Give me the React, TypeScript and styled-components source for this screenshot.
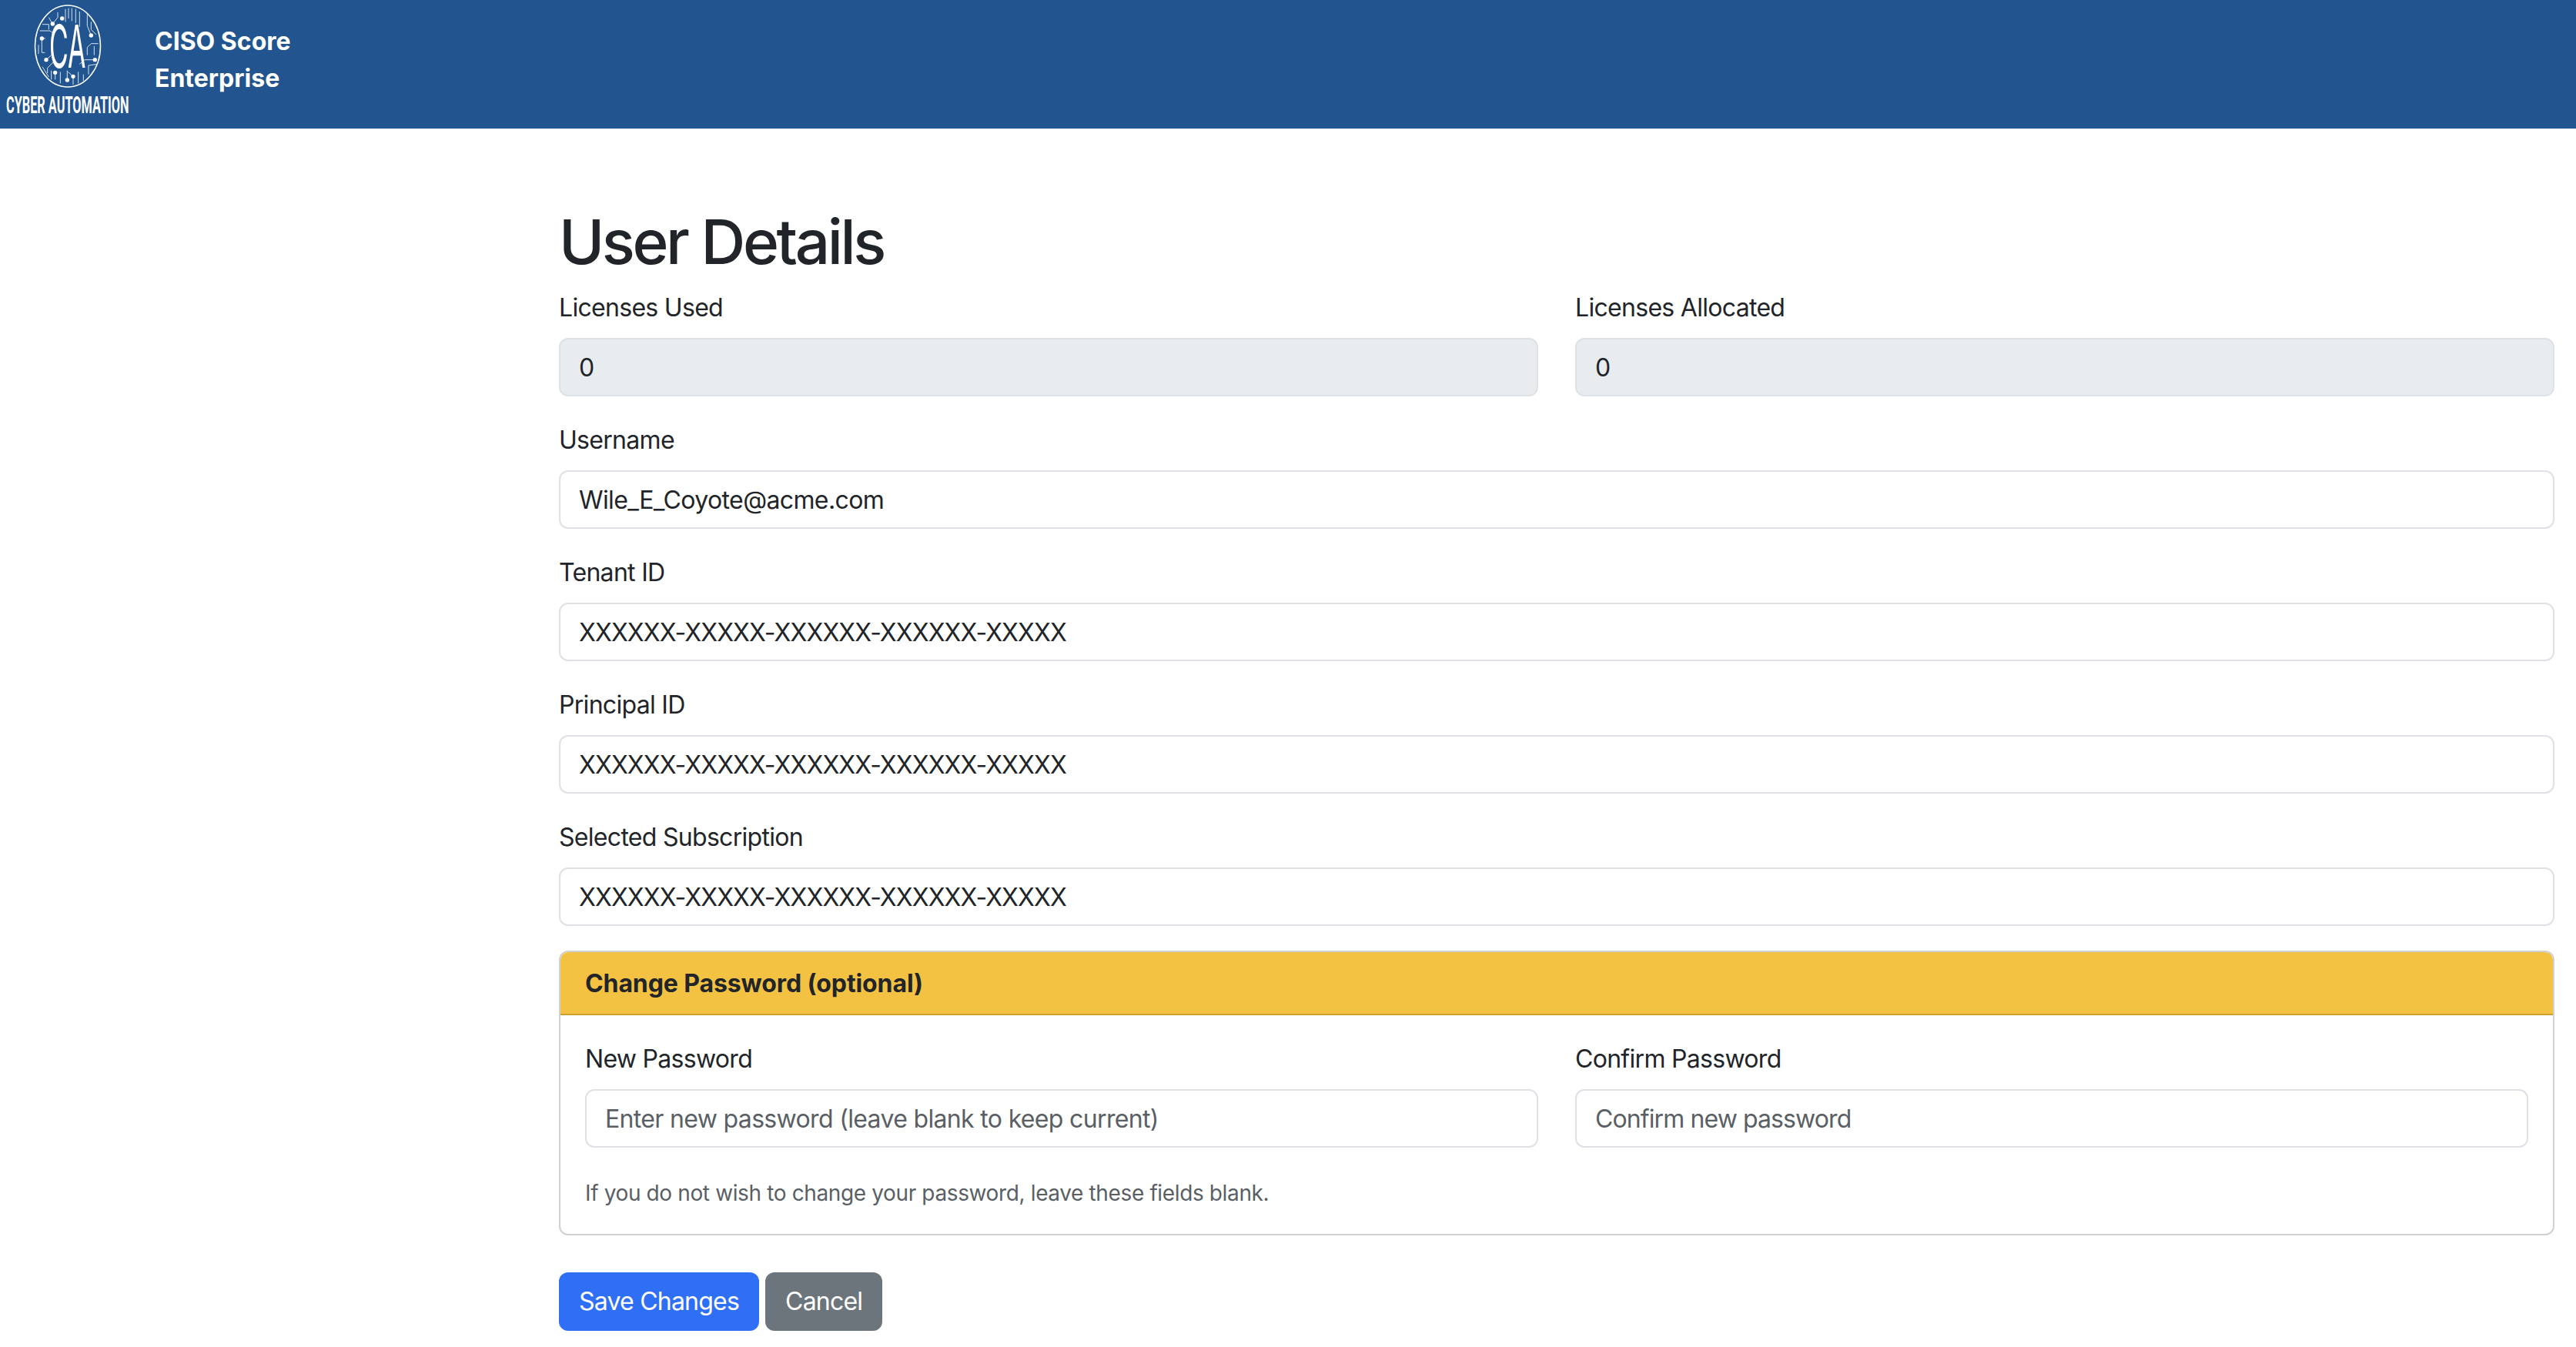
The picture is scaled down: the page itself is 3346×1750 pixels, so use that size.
import React from "react";
import styled, { createGlobalStyle } from "styled-components";

const Global = createGlobalStyle`
  html, body { margin: 0; padding: 0; background: #fff; }
  body { font-family: Inter, "Liberation Sans", sans-serif; color: #212529; font-size: 32px; line-height: 48px; }
  * { box-sizing: border-box; }
`;

const TopBar = styled.header`
  height: 167px;
  background: #22558f;
  display: flex;
  align-items: flex-start;
`;
const LogoBox = styled.div`
  width: 201px;
  flex: none;
`;
const Brand = styled.div`
  padding-top: 30px;
  color: #fff;
  font-weight: 700;
  font-size: 32px;
  line-height: 48px;
`;
const Main = styled.main`
  padding: 96px 28px 22px 726px;
`;
const Title = styled.h1`
  margin: 0 0 13px;
  padding-top: 3px;
  font-size: 80px;
  line-height: 96px;
  font-weight: 500;
  letter-spacing: -3.4px;
`;
const Row = styled.div`
  display: grid;
  grid-template-columns: 1fr 1fr;
  column-gap: 48px;
`;
const Field = styled.div`
  margin-bottom: 32px;
`;
const Label = styled.label`
  display: block;
  margin-bottom: 15px;
  padding-top: 1px;
  font-size: 32px;
  line-height: 48px;
  letter-spacing: -0.7px;
`;
const Input = styled.input<{ $spacing?: string }>`
  display: block;
  width: 100%;
  height: 76px;
  padding: 12px 24px;
  border: 2px solid #dee2e6;
  border-radius: 12px;
  background: ${(p) => (p.disabled ? "#e9ecef" : "#fff")};
  color: #212529;
  opacity: 1;
  font: 400 32px/48px Inter, "Liberation Sans", sans-serif;
  letter-spacing: ${(p) => p.$spacing ?? "-0.7px"};
  outline: none;
  &::placeholder { color: #595f65; opacity: 1; }
`;
const Card = styled.section`
  border: 2px solid #d0d1d2;
  border-radius: 12px;
  overflow: hidden;
  margin-bottom: 48px;
`;
const CardHeader = styled.h2`
  margin: 0;
  padding: 17px 32px 15px;
  background: #f4c242;
  border-bottom: 2px solid #cf9f30;
  font-size: 32px;
  line-height: 48px;
  font-weight: 700;
  letter-spacing: -0.1px;
`;
const CardBody = styled.div`
  padding: 32px;
`;
const Help = styled.div`
  margin-top: 6px;
  font-size: 28px;
  line-height: 42px;
  letter-spacing: -0.37px;
  color: #595f65;
`;
const Actions = styled.div`
  display: flex;
  gap: 8px;
`;
const Button = styled.button<{ $tone: string }>`
  height: 76px;
  padding: 0 26px;
  border: 0;
  border-radius: 12px;
  background: ${(p) => p.$tone};
  color: #fff;
  font: 400 32px/48px Inter, "Liberation Sans", sans-serif;
  letter-spacing: -0.78px;
`;

const traces = [
  "M150 35 V85", "M162 32 V72", "M175 32 V82", "M190 35 V90", "M205 45 V105",
  "M120 48 V68 L100 93", "M85 68 L100 93", "M60 95 H85 V115", "M50 120 H90 L100 128",
  "M45 175 V210", "M58 150 V205 H70", "M235 55 V100 L250 138", "M250 85 V115 L270 135",
  "M278 170 H250 L235 185 V215", "M265 233 H225 L205 250", "M262 180 V215",
  "M275 250 L240 255 V290", "M220 290 V315", "M200 280 V325", "M180 298 L160 280",
  "M180 298 V330", "M157 312 V275", "M130 280 V325", "M110 283 V310", "M95 275 V310",
  "M105 240 L80 265 V285", "M60 260 L85 300", "M58 150 H72", "M75 233 L95 215",
];
const dots: [number, number][] = [
  [137, 72], [100, 93], [58, 150], [250, 138], [265, 233], [180, 298], [157, 312], [110, 283], [75, 233],
];

const Logo = () => (
  <svg width="180" height="166" viewBox="0 0 180 166" role="img" aria-label="Cyber Automation logo">
    <ellipse cx="88" cy="60" rx="42.5" ry="53" fill="none" stroke="#fff" strokeWidth="1.5" />
    <g transform="translate(35 0) scale(0.3333)">
      <g fill="none" stroke="#d5e2ef" strokeWidth="3">
        {traces.map((d) => (
          <path key={d} d={d} />
        ))}
      </g>
      <g fill="#fff">
        {dots.map(([x, y]) => (
          <circle key={`${x}-${y}`} cx={x} cy={y} r="8" />
        ))}
      </g>
    </g>
    <text transform="translate(64 88) scale(0.88 2)" fill="#fff" fontFamily="Inter, sans-serif" fontWeight="400" fontSize="38.5">
      CA
    </text>
    <text transform="translate(8 146.5) scale(1.02 2)" fill="#fff" fontFamily="Roboto, sans-serif" fontWeight="700" fontSize="16">
      CYBER AUTOMATION
    </text>
  </svg>
);

const idSpacing = "-0.89px";
const fields = [
  ["Username", "Wile_E_Coyote@acme.com", "-0.62px"],
  ["Tenant ID", "XXXXXX-XXXXX-XXXXXX-XXXXXX-XXXXX", idSpacing],
  ["Principal ID", "XXXXXX-XXXXX-XXXXXX-XXXXXX-XXXXX", idSpacing],
  ["Selected Subscription", "XXXXXX-XXXXX-XXXXXX-XXXXXX-XXXXX", idSpacing],
];

export default function App() {
  return (
    <>
      <Global />
      <TopBar>
        <LogoBox>
          <Logo />
        </LogoBox>
        <Brand>
          CISO Score
          <br />
          Enterprise
        </Brand>
      </TopBar>
      <Main>
        <Title>User Details</Title>
        <Row>
          <Field>
            <Label>Licenses Used</Label>
            <Input disabled defaultValue="0" />
          </Field>
          <Field>
            <Label>Licenses Allocated</Label>
            <Input disabled defaultValue="0" />
          </Field>
        </Row>
        {fields.map(([label, value, spacing]) => (
          <Field key={label}>
            <Label>{label}</Label>
            <Input defaultValue={value} $spacing={spacing} />
          </Field>
        ))}
        <Card>
          <CardHeader>Change Password (optional)</CardHeader>
          <CardBody>
            <Row>
              <Field>
                <Label>New Password</Label>
                <Input placeholder="Enter new password (leave blank to keep current)" $spacing="-0.66px" />
              </Field>
              <Field>
                <Label>Confirm Password</Label>
                <Input placeholder="Confirm new password" $spacing="-0.9px" />
              </Field>
            </Row>
            <Help>If you do not wish to change your password, leave these fields blank.</Help>
          </CardBody>
        </Card>
        <Actions>
          <Button $tone="#2f6ff5">Save Changes</Button>
          <Button $tone="#6c747c">Cancel</Button>
        </Actions>
      </Main>
    </>
  );
}
